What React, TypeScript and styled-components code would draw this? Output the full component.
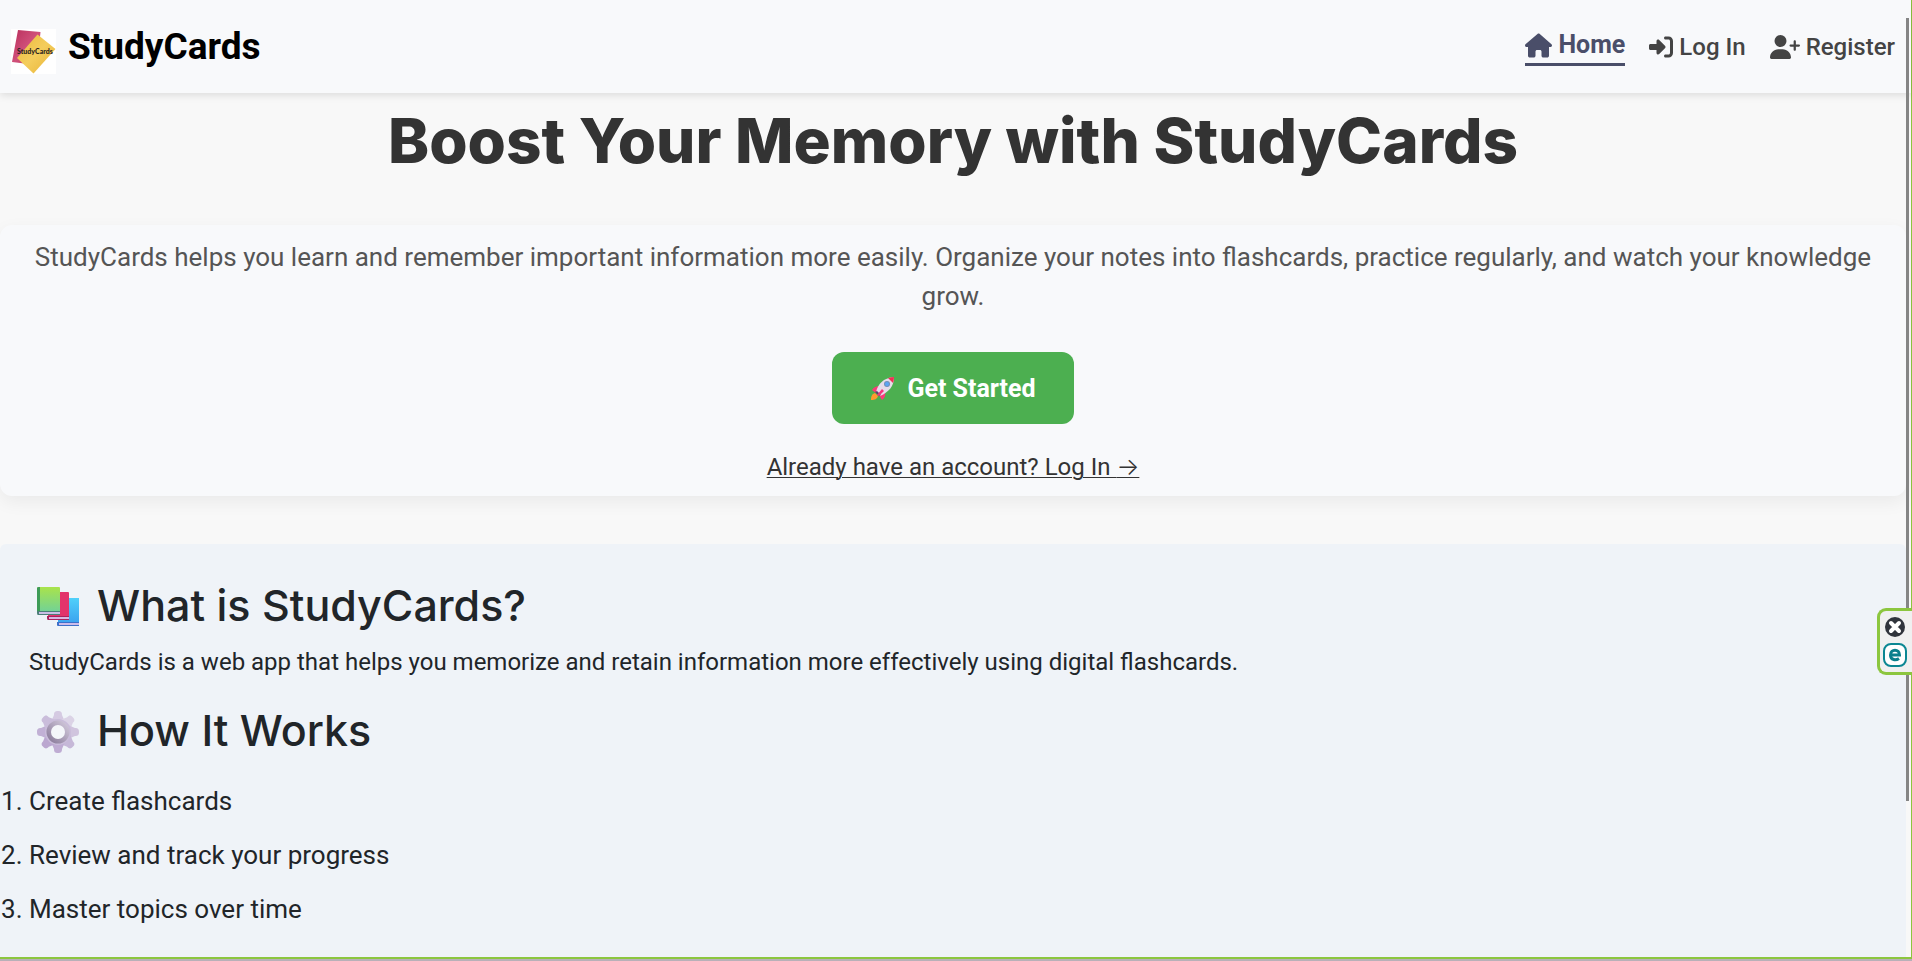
import React from "react";
import styled, { createGlobalStyle } from "styled-components";
import { FaHouse, FaRightToBracket, FaUserPlus } from "react-icons/fa6";

const GlobalStyle = createGlobalStyle`
  *, *::before, *::after { box-sizing: border-box; }
  body {
    margin: 0;
    background: #f8f8f8;
    color: #212529;
    font-family: Roboto, "Liberation Sans", sans-serif;
    font-size: 24px;
    line-height: 36px;
  }
  h1, h2, p, ol { margin: 0; }
`;

const Frame = styled.div`
  position: relative;
  display: flex;
  flex-direction: column;
  min-height: 100vh;
  border-right: 1px solid #8cc63f;
  padding-right: 5px;
`;

const Navbar = styled.header`
  position: relative;
  display: flex;
  align-items: center;
  justify-content: space-between;
  height: 93px;
  margin-right: -5px;
  padding: 0 16px 0 11px;
  background: #f8f9fb;
  box-shadow: 0 2px 8px rgba(0, 0, 0, 0.12);
`;

const Brand = styled.a`
  display: flex;
  align-items: center;
  gap: 12px;
  color: #000;
  font-size: 37px;
  font-weight: 700;
  line-height: 48px;
  text-decoration: none;

  svg { display: block; margin-top: 10px; }
`;

const NavLinks = styled.nav`
  display: flex;
  align-items: center;
  gap: 24px;
`;

const NavLink = styled.a<{ $active?: boolean }>`
  display: flex;
  align-items: center;
  gap: 6px;
  color: ${(p) => (p.$active ? "#4a4e69" : "#444")};
  font-size: ${(p) => (p.$active ? 25 : 24)}px;
  font-weight: ${(p) => (p.$active ? 700 : 500)};
  border-bottom: ${(p) => (p.$active ? "3px solid #4a4e69" : "0")};
  text-decoration: none;
`;

const Main = styled.main`
  display: flex;
  flex: 1;
  flex-direction: column;
`;

const Title = styled.h1`
  padding: 12px 0 48px;
  color: #333;
  font-family: Inter, "Open Sans", sans-serif;
  font-size: 62px;
  font-weight: 800;
  line-height: 72px;
  text-align: center;
`;

const Hero = styled.section`
  display: flex;
  flex-direction: column;
  align-items: center;
  padding: 13px 16px 11px;
  border-radius: 12px;
  background: #f8f9fb;
  box-shadow: 0 6px 18px rgba(0, 0, 0, 0.06);
`;

const Lead = styled.p`
  color: #555;
  font-size: 26px;
  line-height: 39px;
  text-align: center;
`;

const StartButton = styled.button`
  display: flex;
  align-items: center;
  gap: 12px;
  height: 72px;
  margin: 36px 0 25px;
  padding: 0 38px;
  border: 0;
  border-radius: 12px;
  background: #4caf50;
  color: #fff;
  font-family: inherit;
  font-size: 25px;
  font-weight: 700;
  cursor: pointer;
`;

const LoginLink = styled.a`
  color: #333;
  text-decoration-thickness: 1px;
  text-underline-offset: 2px;
`;

const Arrow = styled.span`
  font-family: Inter, sans-serif;
  font-weight: 300;
`;

const Info = styled.section`
  flex: 1;
  margin-top: 48px;
  padding: 36px 0 16px;
  border-radius: 6px 6px 0 0;
  background: #eff3f8;
`;

const SectionTitle = styled.h2`
  display: flex;
  align-items: center;
  gap: 17px;
  padding-left: 36px;
  font-family: Inter, "Open Sans", sans-serif;
  font-size: 43px;
  font-weight: 500;
  line-height: 50px;

  svg { margin-top: 3px; }
`;

const Description = styled.p`
  padding: 14px 29px 25px;
`;

const Steps = styled.ol`
  padding: 19px 0 0 29px;
  font-size: 26px;
  line-height: 54px;
`;

const BottomBar = styled.div`
  height: 4px;
  margin-right: -6px;
  border-top: 2px solid #8cc63f;
  background: #b8b0b8;
`;

const ScrollThumb = styled.div`
  position: absolute;
  top: 18px;
  right: 2px;
  width: 3px;
  height: 81.5%;
  background: #858585;
`;

const ExtensionWidget = styled.aside`
  position: absolute;
  top: 608px;
  right: -1px;
  display: flex;
  flex-direction: column;
  align-items: center;
  gap: 6px;
  width: 35px;
  padding: 6px 2px 5px 0;
  border: 3px solid #8cc63f;
  border-right: 0;
  border-radius: 9px 0 0 9px;
  background: #f0f0f0;
`;

const WidgetButton = styled.button`
  display: flex;
  padding: 0;
  border: 0;
  background: none;
  cursor: pointer;

  svg { display: block; }
`;

const CardsLogo = () => (
  <svg width="45" height="45" viewBox="0 0 45 45" aria-hidden="true">
    <defs>
      <linearGradient id="pinkCard" x1="0" y1="0" x2="1" y2="1">
        <stop offset="0" stopColor="#b92f5c" />
        <stop offset=".5" stopColor="#d0507a" />
        <stop offset="1" stopColor="#b52e58" />
      </linearGradient>
      <linearGradient id="goldCard" x1="0" y1="0" x2="1" y2="1">
        <stop offset="0" stopColor="#e9b93c" />
        <stop offset=".5" stopColor="#f4cd5c" />
        <stop offset="1" stopColor="#e8b235" />
      </linearGradient>
    </defs>
    <rect width="45" height="45" fill="#fff" />
    <path d="M7 1 29.500 3 26 36 1 33z" fill="url(#pinkCard)" />
    <path d="M26.500 5.500 44.500 20 22.500 44.500 6 29z" fill="url(#goldCard)" />
    <text x="6" y="25" fontFamily="Lato, sans-serif" fontSize="7" fontWeight="900" fill="#2b2520">
      StudyCards
    </text>
  </svg>
);

const Rocket = () => (
  <svg width="25" height="25" viewBox="0 0 25 25" aria-hidden="true">
    <path d="M1 24c0-4 1-6 4-7l3 3c-1 3-3 4-7 4z" fill="#ff9a2e" />
    <path d="M2 14c2-3 4-4 8-4l-4 7zM9 19l6-4c1 4 0 7-3 9z" fill="#fa3b78" />
    <path d="M6 16C8 8 13 2 24 1c0 9-5 15-14 19z" fill="#e6dcea" />
    <path d="M18 2q3-1 6-1 0 3-1 6z" fill="#f02f55" />
    <path d="m5 16 4 4 2-1-4-4z" fill="#5a416d" />
    <path d="m12 13-5 6 2 1 5-5z" fill="#f5357c" />
    <circle cx="17" cy="8" r="3" fill="#6f8fb8" />
    <circle cx="17" cy="8" r="2" fill="#5ba5f5" />
  </svg>
);

const Books = () => (
  <svg width="44" height="42" viewBox="0 0 44 42" aria-hidden="true">
    <defs>
      <linearGradient id="greenBook" x1="0" y1="0" x2="0" y2="1">
        <stop offset="0" stopColor="#a9e34b" />
        <stop offset="1" stopColor="#6fd19a" />
      </linearGradient>
      <linearGradient id="blueBook" x1="0" y1="0" x2="0" y2="1">
        <stop offset="0" stopColor="#50d0fa" />
        <stop offset="1" stopColor="#3ba2ef" />
      </linearGradient>
    </defs>
    <path d="M22 12h21v25H22z" fill="url(#blueBook)" />
    <path d="M21 36h22v4H22q-1 0-1-1z" fill="#3d6fc9" />
    <path d="M23 37h20v2H23z" fill="#cbbbea" />
    <path d="M12 6h20q1 0 1 1v24H12z" fill="#e3336b" />
    <path d="M11 30h22v4H12q-1 0-1-2z" fill="#a9235d" />
    <path d="M13 31h20v2H13z" fill="#d9b7e2" />
    <path d="M2 1h21q1 0 1 1v25H1V2z" fill="url(#greenBook)" />
    <path d="M1 2q0-1 2-1h1v24l-3 2z" fill="#3d9b57" />
    <path d="M1 25h23v4H2q-1 0-1-2z" fill="#4b7f79" />
    <path d="M3 26h21v2H3z" fill="#cabfe5" />
  </svg>
);

const Gear = () => (
  <svg width="44" height="42" viewBox="0 0 44 42" aria-hidden="true">
    <defs>
      <linearGradient id="gearRing" x1="1" y1="0" x2="0" y2="1">
        <stop offset="0" stopColor="#cfc6d9" />
        <stop offset="1" stopColor="#8c7d9c" />
      </linearGradient>
    </defs>
    {["#d5cae2", "#dbd3e6", "#d0c4de", "#c6b8d8", "#bfacd3", "#bba7d0", "#c1b0d5", "#cabddb"].map(
      (color, i) => (
        <path
          key={color}
          transform={`rotate(${i * 45} 22 21)`}
          d="M22 0c3 0 4 1 4 4l3 7-7 8-7-8 3-7c0-3 1-4 4-4z"
          fill={color}
        />
      ),
    )}
    <circle cx="22" cy="21" r="13" fill="#c9bcda" />
    <circle cx="22" cy="21" r="9" fill="none" stroke="url(#gearRing)" strokeWidth="5" />
    <circle cx="22" cy="21" r="7" fill="#f4f6fa" />
  </svg>
);

const CloseIcon = () => (
  <svg width="20" height="20" viewBox="0 0 20 20" aria-hidden="true">
    <circle cx="10" cy="10" r="10" fill="#30343c" />
    <path d="m6 6 8 8m0-8-8 8" stroke="#fff" strokeWidth="4" strokeLinecap="round" />
  </svg>
);

const ExtensionIcon = () => (
  <svg width="24" height="24" viewBox="0 0 24 24" aria-hidden="true">
    <rect x="1" y="1" width="22" height="22" rx="7" fill="#fff" stroke="#0b8793" strokeWidth="2" />
    <path
      d="M8 12h8.500c0-6.500-9-6.500-9 0 0 5.500 5.500 5.500 8.500 3.500"
      fill="none"
      stroke="#0b7f8c"
      strokeWidth="3"
    />
  </svg>
);

const steps = ["Create flashcards", "Review and track your progress", "Master topics over time"];

export default function App() {
  return (
    <>
      <GlobalStyle />
      <Frame>
        <Navbar>
          <Brand href="#">
            <CardsLogo />
            StudyCards
          </Brand>
          <NavLinks>
            <NavLink href="#" $active>
              <FaHouse size={27} />
              Home
            </NavLink>
            <NavLink href="#login">
              <FaRightToBracket size={24} />
              Log In
            </NavLink>
            <NavLink href="#register">
              <FaUserPlus size={30} />
              Register
            </NavLink>
          </NavLinks>
        </Navbar>
        <Main>
          <Title>Boost Your Memory with StudyCards</Title>
          <Hero>
            <Lead>
              StudyCards helps you learn and remember important information more easily. Organize
              your notes into flashcards, practice regularly, and watch your knowledge grow.
            </Lead>
            <StartButton type="button">
              <Rocket />
              Get Started
            </StartButton>
            <LoginLink href="#login">
              Already have an account? Log In <Arrow>→</Arrow>
            </LoginLink>
          </Hero>
          <Info>
            <SectionTitle>
              <Books />
              What is StudyCards?
            </SectionTitle>
            <Description>
              StudyCards is a web app that helps you memorize and retain information more
              effectively using digital flashcards.
            </Description>
            <SectionTitle>
              <Gear />
              How It Works
            </SectionTitle>
            <Steps>
              {steps.map((step) => (
                <li key={step}>{step}</li>
              ))}
            </Steps>
          </Info>
        </Main>
        <BottomBar />
        <ScrollThumb />
        <ExtensionWidget aria-label="Extension">
          <WidgetButton type="button" aria-label="Close">
            <CloseIcon />
          </WidgetButton>
          <WidgetButton type="button" aria-label="Open extension">
            <ExtensionIcon />
          </WidgetButton>
        </ExtensionWidget>
      </Frame>
    </>
  );
}
